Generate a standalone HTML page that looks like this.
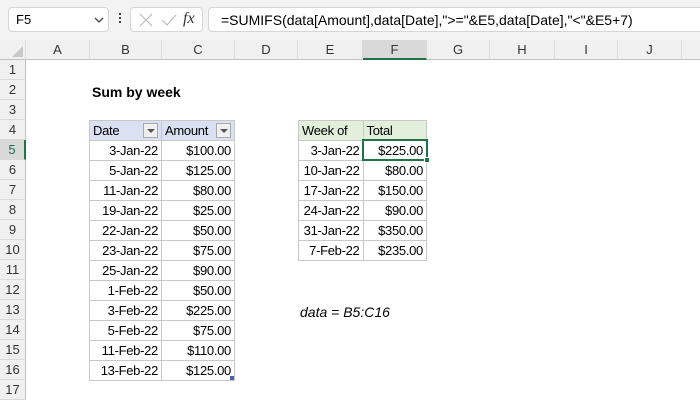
<!DOCTYPE html>
<html><head><style>
*{margin:0;padding:0;box-sizing:border-box}
body{width:700px;height:400px;overflow:hidden;background:#fff;font-family:"Liberation Sans",sans-serif;position:relative;color:#000}
.a{position:absolute}
.tb{left:0;top:0;width:700px;height:40px;background:#f3f3f3}
.box{background:#fff;border:1px solid #d6d6d6;border-radius:4px;height:25px;top:7px}
.ch{top:40px;height:20px;background:#f0f0f0;border-bottom:1px solid #c0c0c0;border-right:1px solid #dadada;font-size:13px;color:#333;text-align:center;line-height:19px}
.rh{left:0;width:26px;height:20px;background:#f0f0f0;border-bottom:1px solid #dadada;border-right:1px solid #c0c0c0;font-size:13px;color:#333;text-align:center;line-height:20px}
.c{height:20px;font-size:13px;letter-spacing:-0.3px;line-height:20px;padding:0 3px;white-space:nowrap;border-right:1px solid #c8c8c8;border-bottom:1px solid #c8c8c8;overflow:hidden}
.r{text-align:right}
.dd{position:absolute;right:3px;top:2px;width:15px;height:15px;border:1px solid #a8a8a8;background:#f0f0f0}
.dd:after{content:"";position:absolute;left:3px;top:5px;border-left:4px solid transparent;border-right:4px solid transparent;border-top:4px solid #555}
</style></head><body>
<div class="a tb"></div>
<div class="a box" style="left:8px;width:101px"><span class="a" style="left:7px;top:4px;font-size:13px">F5</span>
<svg class="a" style="left:85px;top:9px" width="10" height="7"><path d="M1 1 L5 5 L9 1" stroke="#444" stroke-width="1.3" fill="none"/></svg></div>
<div class="a" style="left:119px;top:13px;width:2px;height:2px;background:#444;box-shadow:0 4px #444,0 8px #444"></div>
<div class="a box" style="left:130px;width:73px">
<svg class="a" style="left:8px;top:5px" width="14" height="14"><path d="M1 1L13 13M13 1L1 13" stroke="#bbb" stroke-width="1.2"/></svg>
<svg class="a" style="left:30px;top:5px" width="16" height="14"><path d="M1 7L6 12L15 2" stroke="#bbb" stroke-width="1.2" fill="none"/></svg>
<span class="a" style="left:52px;top:2px;font-family:'Liberation Serif',serif;font-style:italic;font-size:16px;color:#333">fx</span></div>
<div class="a box" style="left:208px;width:500px"><span class="a" style="left:12px;top:4px;font-size:14px">=SUMIFS(data[Amount],data[Date],"&gt;="&amp;E5,data[Date],"&lt;"&amp;E5+7)</span></div>

<div class="a ch" style="left:0;width:26px"></div>
<svg class="a" style="left:12px;top:46px" width="11" height="11"><path d="M11 0L11 11L0 11Z" fill="#c8c8c8"/></svg>
<div class="a ch" style="left:26px;width:64px">A</div>
<div class="a ch" style="left:90px;width:72px">B</div>
<div class="a ch" style="left:162px;width:73px">C</div>
<div class="a ch" style="left:235px;width:63px">D</div>
<div class="a ch" style="left:298px;width:65px">E</div>
<div class="a ch" style="left:363px;width:64px;background:#d9d9d9;border-bottom:2px solid #217346">F</div>
<div class="a ch" style="left:427px;width:63px">G</div>
<div class="a ch" style="left:490px;width:65px">H</div>
<div class="a ch" style="left:555px;width:63px">I</div>
<div class="a ch" style="left:618px;width:64px">J</div>
<div class="a ch" style="left:682px;width:30px"></div>

<div class="a rh" style="top:60px">1</div><div class="a rh" style="top:80px">2</div><div class="a rh" style="top:100px">3</div><div class="a rh" style="top:120px">4</div>
<div class="a rh" style="top:140px;background:#d9d9d9;border-right:2px solid #217346;color:#217346">5</div>
<div class="a rh" style="top:160px">6</div><div class="a rh" style="top:180px">7</div><div class="a rh" style="top:200px">8</div><div class="a rh" style="top:220px">9</div><div class="a rh" style="top:240px">10</div><div class="a rh" style="top:260px">11</div><div class="a rh" style="top:280px">12</div><div class="a rh" style="top:300px">13</div><div class="a rh" style="top:320px">14</div><div class="a rh" style="top:340px">15</div><div class="a rh" style="top:360px">16</div><div class="a rh" style="top:380px">17</div>

<div class="a" style="left:92px;top:82px;font-size:14px;font-weight:bold;line-height:20px">Sum by week</div>
<div class="a" style="left:300px;top:302px;font-size:14px;font-style:italic;line-height:20px">data = B5:C16</div>

<div class="a" style="left:89px;top:120px;width:146px;border-left:1px solid #c8c8c8;border-top:1px solid #c8c8c8">
<div style="display:flex;background:#d9e1f2"><div class="c" style="width:72px;position:relative">Date<span class="dd"></span></div><div class="c" style="width:73px;position:relative">Amount<span class="dd"></span></div></div>
<div style="display:flex"><div class="c r" style="width:72px">3-Jan-22</div><div class="c r" style="width:73px">$100.00</div></div>
<div style="display:flex"><div class="c r" style="width:72px">5-Jan-22</div><div class="c r" style="width:73px">$125.00</div></div>
<div style="display:flex"><div class="c r" style="width:72px">11-Jan-22</div><div class="c r" style="width:73px">$80.00</div></div>
<div style="display:flex"><div class="c r" style="width:72px">19-Jan-22</div><div class="c r" style="width:73px">$25.00</div></div>
<div style="display:flex"><div class="c r" style="width:72px">22-Jan-22</div><div class="c r" style="width:73px">$50.00</div></div>
<div style="display:flex"><div class="c r" style="width:72px">23-Jan-22</div><div class="c r" style="width:73px">$75.00</div></div>
<div style="display:flex"><div class="c r" style="width:72px">25-Jan-22</div><div class="c r" style="width:73px">$90.00</div></div>
<div style="display:flex"><div class="c r" style="width:72px">1-Feb-22</div><div class="c r" style="width:73px">$50.00</div></div>
<div style="display:flex"><div class="c r" style="width:72px">3-Feb-22</div><div class="c r" style="width:73px">$225.00</div></div>
<div style="display:flex"><div class="c r" style="width:72px">5-Feb-22</div><div class="c r" style="width:73px">$75.00</div></div>
<div style="display:flex"><div class="c r" style="width:72px">11-Feb-22</div><div class="c r" style="width:73px">$110.00</div></div>
<div style="display:flex"><div class="c r" style="width:72px">13-Feb-22</div><div class="c r" style="width:73px">$125.00</div></div>
</div>
<div class="a" style="left:230px;top:376px;width:4px;height:4px;background:#4a5fb0"></div>

<div class="a" style="left:298px;top:120px;width:129px;border-left:1px solid #c8c8c8;border-top:1px solid #c8c8c8">
<div style="display:flex;background:#e2efda"><div class="c" style="width:65px">Week of</div><div class="c" style="width:64px">Total</div></div>
<div style="display:flex"><div class="c r" style="width:65px">3-Jan-22</div><div class="c r" style="width:64px">$225.00</div></div>
<div style="display:flex"><div class="c r" style="width:65px">10-Jan-22</div><div class="c r" style="width:64px">$80.00</div></div>
<div style="display:flex"><div class="c r" style="width:65px">17-Jan-22</div><div class="c r" style="width:64px">$150.00</div></div>
<div style="display:flex"><div class="c r" style="width:65px">24-Jan-22</div><div class="c r" style="width:64px">$90.00</div></div>
<div style="display:flex"><div class="c r" style="width:65px">31-Jan-22</div><div class="c r" style="width:64px">$350.00</div></div>
<div style="display:flex"><div class="c r" style="width:65px">7-Feb-22</div><div class="c r" style="width:64px">$235.00</div></div>
</div>
<div class="a" style="left:362px;top:139px;width:66px;height:22px;border:2px solid #217346"></div>
<div class="a" style="left:424px;top:157px;width:6px;height:6px;background:#217346;border:1px solid #fff"></div>
</body></html>
